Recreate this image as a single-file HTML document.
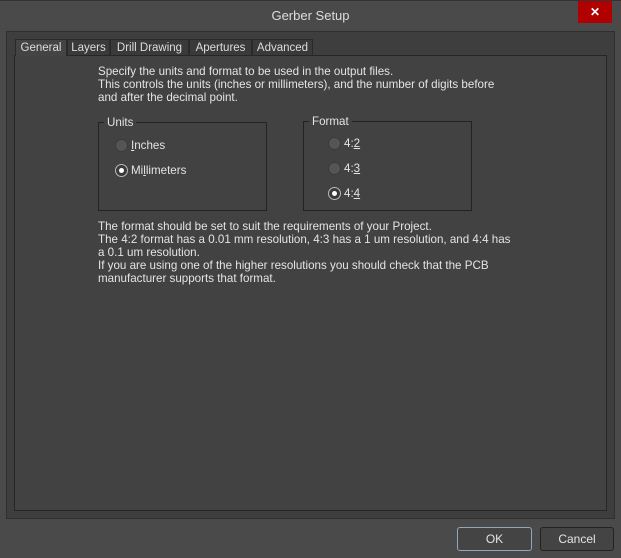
<!DOCTYPE html><html><head><style>
body{margin:0;width:621px;height:558px;background:#4a4a4a;font-family:"Liberation Sans",sans-serif;font-size:11.6px;color:#e4e4e4;position:relative;overflow:hidden}
.a{position:absolute}
.t{white-space:nowrap}
.tab{position:absolute;top:39px;height:16px;background:#3a3a3a;border:1px solid #2a2a2a;border-bottom:none;color:#ddd;font-size:11.5px;line-height:16px;text-align:center;box-sizing:border-box}
.rad{position:absolute;width:13px;height:13px;border-radius:50%;background:#555;border:1px solid #3a3a3a;box-sizing:border-box}
.sel{background:#3a3a3a;border:1px solid #bbb}
.sel::after{content:"";position:absolute;left:3px;top:3px;width:5px;height:5px;border-radius:50%;background:#fff}
.gb{position:absolute;border:1px solid #222;box-sizing:border-box}
.btn{position:absolute;top:527px;height:24px;border:1px solid #222;border-radius:3px;background:#444;box-sizing:border-box;text-align:center;line-height:22px;font-size:12px}
</style></head><body>
<div class="a" style="left:0;top:0;width:621px;height:1px;background:#333"></div>
<div class="a t" style="left:0;width:621px;top:8px;text-align:center;font-size:13px;color:#ddd">Gerber Setup</div>
<div class="a" style="left:578px;top:1px;width:34px;height:22px;background:#b00000;color:#fff;text-align:center;font-size:12px;line-height:22px;font-weight:bold">✕</div>
<div class="a" style="left:6px;top:31px;width:609px;height:488px;background:#3e3e3e;border:1px solid #2f2f2f;box-sizing:border-box"></div>
<div class="a" style="left:14px;top:55px;width:593px;height:456px;background:#424242;border:1px solid #262626;box-sizing:border-box"></div>
<div class="tab" style="left:15px;width:52px;background:#444;height:17px">General</div>
<div class="tab" style="left:67px;width:43px">Layers</div>
<div class="tab" style="left:110px;width:79px">Drill Drawing</div>
<div class="tab" style="left:189px;width:63px">Apertures</div>
<div class="tab" style="left:252px;width:61px">Advanced</div>
<div class="a t" style="left:98px;top:65px;line-height:13px">Specify the units and format to be used in the output files.<br>This controls the units (inches or millimeters), and the number of digits before<br>and after the decimal point.</div>
<div class="gb" style="left:98px;top:122px;width:169px;height:89px"></div>
<div class="a t" style="left:104px;top:116px;background:#424242;padding:0 3px">Units</div>
<div class="rad" style="left:115px;top:139px"></div><div class="a t" style="left:131px;top:139px"><u>I</u>nches</div>
<div class="rad sel" style="left:115px;top:164px"></div><div class="a t" style="left:131px;top:164px">Mi<u>l</u>limeters</div>
<div class="gb" style="left:303px;top:121px;width:169px;height:90px"></div>
<div class="a t" style="left:309px;top:115px;background:#424242;padding:0 3px">Format</div>
<div class="rad" style="left:328px;top:137px"></div><div class="a t" style="left:344px;top:137px">4:<u>2</u></div>
<div class="rad" style="left:328px;top:162px"></div><div class="a t" style="left:344px;top:162px">4:<u>3</u></div>
<div class="rad sel" style="left:328px;top:187px"></div><div class="a t" style="left:344px;top:187px">4:<u>4</u></div>
<div class="a t" style="left:98px;top:220px;line-height:13px">The format should be set to suit the requirements of your Project.<br>The 4:2 format has a 0.01 mm resolution, 4:3 has a 1 um resolution, and 4:4 has<br>a 0.1 um resolution.<br>If you are using one of the higher resolutions you should check that the PCB<br>manufacturer supports that format.</div>
<div class="btn" style="left:457px;width:75px;border-color:#8fa8c0">OK</div>
<div class="btn" style="left:540px;width:74px">Cancel</div>
</body></html>
